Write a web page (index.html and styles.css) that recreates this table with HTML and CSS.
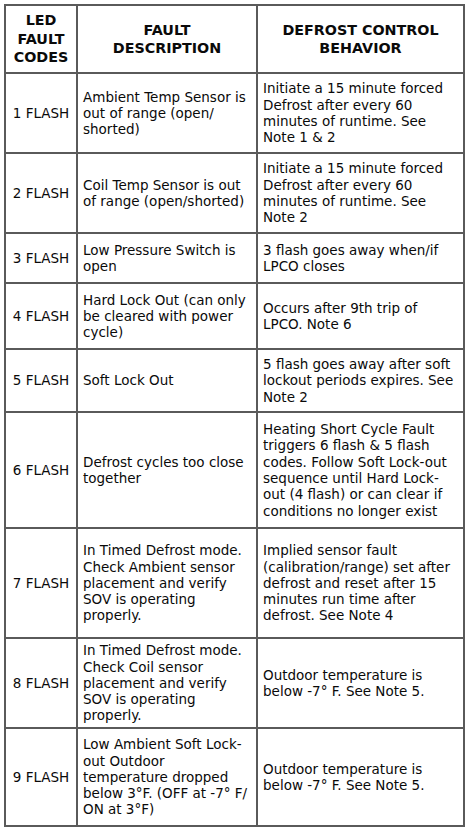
FILE: index.html
```html
<!DOCTYPE html>
<html>
<head>
<meta charset="utf-8">
<link rel="stylesheet" href="styles.css">
</head>
<body>
<table class="codes">
  <colgroup>
    <col class="c1"><col class="c2"><col class="c3">
  </colgroup>
  <thead>
    <tr class="h-head">
      <th>LED<br>FAULT<br>CODES</th>
      <th>FAULT<br>DESCRIPTION</th>
      <th>DEFROST CONTROL<br>BEHAVIOR</th>
    </tr>
  </thead>
  <tbody>
    <tr class="h-r1">
      <td class="code">1 FLASH</td>
      <td>Ambient Temp Sensor is<br>out of range (open/<br>shorted)</td>
      <td>Initiate a 15 minute forced<br>Defrost after every 60<br>minutes of runtime. See<br>Note 1 &amp; 2</td>
    </tr>
    <tr class="h-r2">
      <td class="code">2 FLASH</td>
      <td>Coil Temp Sensor is out<br>of range (open/shorted)</td>
      <td>Initiate a 15 minute forced<br>Defrost after every 60<br>minutes of runtime. See<br>Note 2</td>
    </tr>
    <tr class="h-r3">
      <td class="code">3 FLASH</td>
      <td>Low Pressure Switch is<br>open</td>
      <td>3 flash goes away when/if<br>LPCO closes</td>
    </tr>
    <tr class="h-r4">
      <td class="code">4 FLASH</td>
      <td>Hard Lock Out (can only<br>be cleared with power<br>cycle)</td>
      <td>Occurs after 9th trip of<br>LPCO. Note 6</td>
    </tr>
    <tr class="h-r5">
      <td class="code">5 FLASH</td>
      <td>Soft Lock Out</td>
      <td>5 flash goes away after soft<br>lockout periods expires. See<br>Note 2</td>
    </tr>
    <tr class="h-r6">
      <td class="code">6 FLASH</td>
      <td>Defrost cycles too close<br>together</td>
      <td>Heating Short Cycle Fault<br>triggers 6 flash &amp; 5 flash<br>codes. Follow Soft Lock-out<br>sequence until Hard Lock-<br>out (4 flash) or can clear if<br>conditions no longer exist</td>
    </tr>
    <tr class="h-r7">
      <td class="code">7 FLASH</td>
      <td>In Timed Defrost mode.<br>Check Ambient sensor<br>placement and verify<br>SOV is operating<br>properly.</td>
      <td>Implied sensor fault<br>(calibration/range) set after<br>defrost and reset after 15<br>minutes run time after<br>defrost. See Note 4</td>
    </tr>
    <tr class="h-r8">
      <td class="code">8 FLASH</td>
      <td>In Timed Defrost mode.<br>Check Coil sensor<br>placement and verify<br>SOV is operating<br>properly.</td>
      <td>Outdoor temperature is<br>below -7° F. See Note 5.</td>
    </tr>
    <tr class="h-r9">
      <td class="code">9 FLASH</td>
      <td>Low Ambient Soft Lock-<br>out Outdoor<br>temperature dropped<br>below 3°F. (OFF at -7° F/<br>ON at 3°F)</td>
      <td>Outdoor temperature is<br>below -7° F. See Note 5.</td>
    </tr>
  </tbody>
</table>
</body>
</html>
```
FILE: styles.css
```css
html, body {
  margin: 0;
  padding: 0;
  background: #ffffff;
}
body {
  padding: 4px 0 0 4px;
  font-family: "DejaVu Sans", Verdana, sans-serif;
  color: #0a0a0a;
}
.codes {
  border-collapse: collapse;
  table-layout: fixed;
  width: 461px;
}
.c1 { width: 72px; }
.c2 { width: 180px; }
.c3 { width: 207px; }
.codes th, .codes td {
  border: 2px solid #5a5a5a;
  padding: 0 0 0 5px;
  vertical-align: middle;
  font-size: 13.5px;
  line-height: 16.3px;
  white-space: nowrap;
  overflow: hidden;
}
.codes th {
  font-weight: bold;
  font-size: 14.3px;
  line-height: 18.5px;
  text-align: center;
  padding: 0;
}
.codes td.code {
  text-align: center;
  padding: 0;
}
.h-head { height: 68px; }
.h-r1 { height: 80px; }
.h-r2 { height: 80px; }
.h-r3 { height: 50px; }
.h-r4 { height: 66px; }
.h-r5 { height: 63px; }
.h-r6 { height: 116px; }
.h-r7 { height: 110px; }
.h-r8 { height: 90px; }
.h-r9 { height: 98px; }
```
